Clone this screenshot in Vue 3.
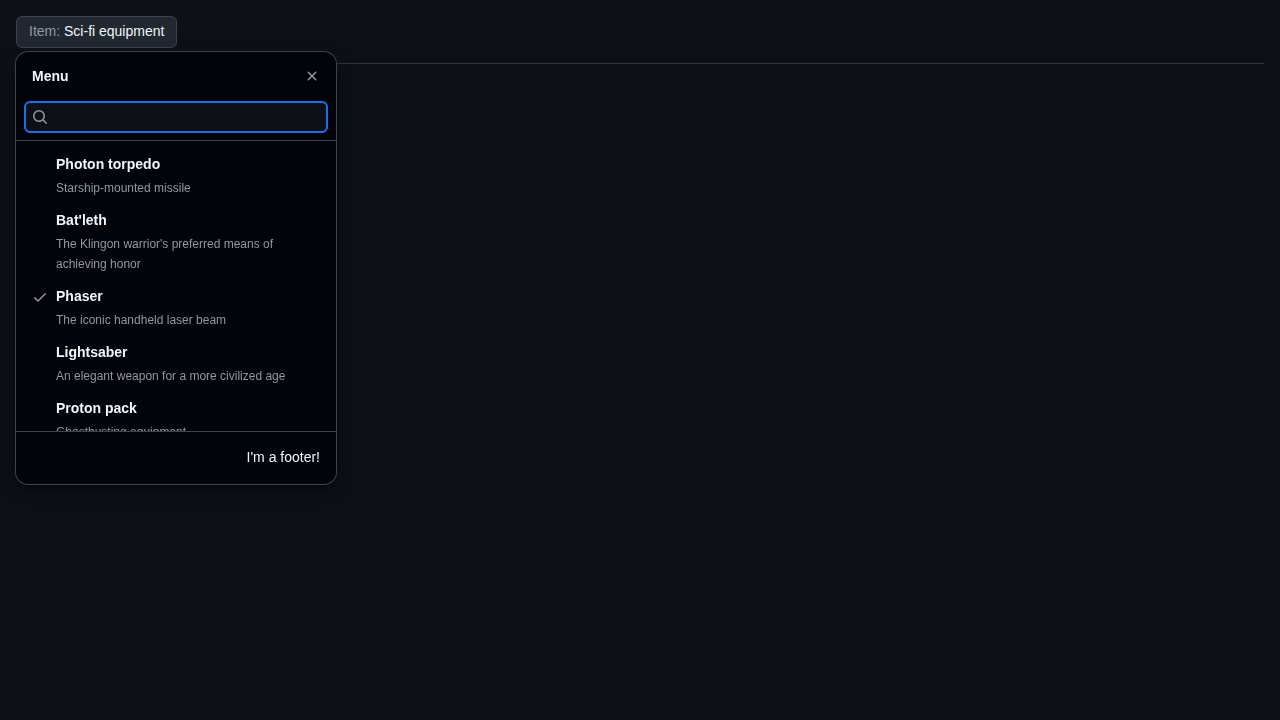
<script setup>
import { ref } from 'vue'

const query = ref('')
const selected = ref('Phaser')
const items = [
  { name: 'Photon torpedo', description: 'Starship-mounted missile' },
  { name: "Bat'leth", description: "The Klingon warrior's preferred means of achieving honor" },
  { name: 'Phaser', description: 'The iconic handheld laser beam' },
  { name: 'Lightsaber', description: 'An elegant weapon for a more civilized age' },
  { name: 'Proton pack', description: 'Ghostbusting equipment' },
]
</script>

<template>
  <main class="page">
    <div class="anchor">
      <button type="button" class="trigger" aria-haspopup="dialog" aria-expanded="true">
        <span class="trigger-prefix">Item:</span> Sci-fi equipment
      </button>

      <section class="panel" role="dialog" aria-labelledby="panel-title">
        <header class="panel-header">
          <div class="title-row">
            <h1 id="panel-title" class="title">Menu</h1>
            <button type="button" class="close" aria-label="Close">
              <svg class="icon" viewBox="0 0 16 16" aria-hidden="true">
                <path d="M3.72 3.72a.75.75 0 0 1 1.06 0L8 6.94l3.22-3.22a.749.749 0 0 1 1.275.326.749.749 0 0 1-.215.734L9.06 8l3.22 3.22a.749.749 0 0 1-.326 1.275.749.749 0 0 1-.734-.215L8 9.06l-3.22 3.22a.751.751 0 0 1-1.042-.018.751.751 0 0 1-.018-1.042L6.94 8 3.72 4.78a.75.75 0 0 1 0-1.06Z" />
              </svg>
            </button>
          </div>
          <label class="search">
            <svg class="icon" viewBox="0 0 16 16" aria-hidden="true">
              <path d="M10.68 11.74a6 6 0 0 1-7.922-8.982 6 6 0 0 1 8.982 7.922l3.04 3.04a.749.749 0 0 1-.326 1.275.749.749 0 0 1-.734-.215ZM11.5 7a4.499 4.499 0 1 0-8.997 0A4.499 4.499 0 0 0 11.5 7Z" />
            </svg>
            <input v-model="query" class="search-input" type="text" aria-label="Filter items" />
          </label>
        </header>

        <ul class="list" role="listbox" aria-labelledby="panel-title">
          <li v-for="item in items" :key="item.name" role="option" :aria-selected="item.name === selected">
            <button type="button" class="item" @click="selected = item.name">
              <span class="mark">
                <svg v-if="item.name === selected" class="icon" viewBox="0 0 16 16" aria-hidden="true">
                  <path d="M13.78 4.22a.75.75 0 0 1 0 1.06l-7.25 7.25a.75.75 0 0 1-1.06 0L2.22 9.28a.751.751 0 0 1 .018-1.042.751.751 0 0 1 1.042-.018L6 10.94l6.72-6.72a.75.75 0 0 1 1.06 0Z" />
                </svg>
              </span>
              <span class="item-text">
                <span class="item-name">{{ item.name }}</span>
                <span class="item-description">{{ item.description }}</span>
              </span>
            </button>
          </li>
        </ul>

        <footer class="panel-footer">I'm a footer!</footer>
      </section>
    </div>
    <hr class="rule" />
  </main>
</template>

<style>
body {
  background: #0d1117;
}
</style>

<style scoped>
.page {
  box-sizing: border-box;
  min-height: 100vh;
  padding: 16px;
  color: #f0f6fc;
  font-family: "Liberation Sans", Arial, sans-serif;
  font-size: 14px;
  line-height: 20px;
}
.anchor {
  position: relative;
  display: flex;
}
button,
input {
  font: inherit;
  color: inherit;
}
.icon {
  display: block;
  width: 16px;
  height: 16px;
  flex: none;
  fill: #9198a1;
}
.trigger {
  height: 32px;
  padding: 0 12px 2px;
  border: 1px solid #3d444d;
  border-radius: 6px;
  background: #212830;
  line-height: 20px;
  cursor: pointer;
}
.trigger-prefix {
  color: #9198a1;
}
.rule {
  margin: 15px 0 0;
  border: 0;
  border-top: 1px solid #3d444db3;
}
.panel {
  position: absolute;
  z-index: 1;
  top: 100%;
  left: 0;
  width: 320px;
  max-width: 100%;
  margin-top: 4px;
  overflow: hidden;
  border-radius: 12px;
  background: #010409;
  box-shadow: 0 0 0 1px #3d444d, 0 6px 12px -3px #01040966, 0 6px 18px 0 #01040966;
  will-change: transform;
}
.panel-header {
  padding: 8px;
  padding-bottom: 7px;
  border-bottom: 1px solid #3d444d;
}
.title-row {
  display: flex;
  align-items: center;
  justify-content: space-between;
  padding-left: 8px;
}
.title {
  margin: 0;
  font-size: 14px;
  font-weight: 700;
}
.close {
  display: grid;
  place-items: center;
  width: 32px;
  height: 32px;
  padding: 0;
  border: 0;
  border-radius: 6px;
  background: transparent;
  cursor: pointer;
}
.search {
  display: flex;
  align-items: center;
  gap: 8px;
  height: 28px;
  margin-top: 9px;
  padding: 0 6px;
  border: 2px solid #1f6feb;
  border-radius: 6px;
  background: #0d1117;
}
.search-input {
  flex: 1;
  min-width: 0;
  padding: 0;
  border: 0;
  outline: 0;
  background: transparent;
}
.list {
  height: 290px;
  box-sizing: border-box;
  margin: 0;
  padding: 7px 8px;
  overflow-y: auto;
  scrollbar-width: none;
  list-style: none;
}
.item {
  display: flex;
  gap: 8px;
  width: 100%;
  padding: 6px 8px;
  border: 0;
  border-radius: 6px;
  background: transparent;
  text-align: left;
  cursor: pointer;
}
.mark {
  display: flex;
  align-items: center;
  flex: none;
  width: 16px;
  height: 22px;
}
.item-text {
  display: flex;
  flex-direction: column;
  gap: 4px;
  min-width: 0;
}
.item-name {
  font-weight: 700;
}
.item-description {
  color: #9198a1;
  font-size: 12px;
}
.panel-footer {
  padding: 15px 16px 17px;
  border-top: 1px solid #3d444d;
  text-align: right;
}
</style>
